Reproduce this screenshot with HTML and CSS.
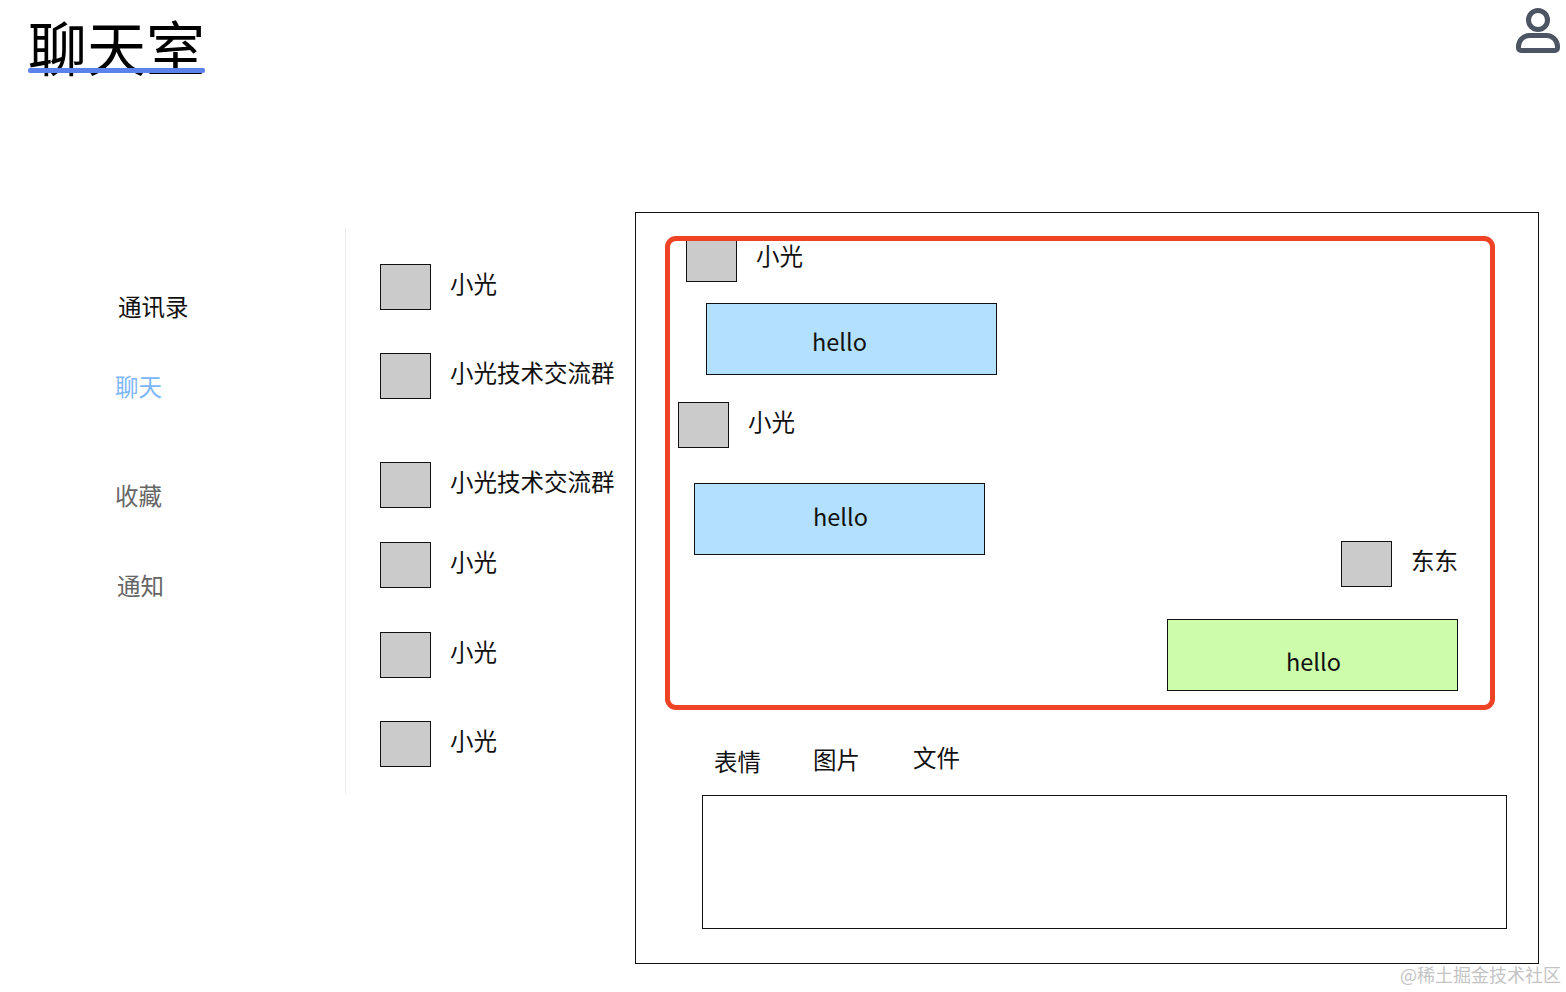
FILE: index.html
```html
<!DOCTYPE html>
<html lang="zh">
<head>
<meta charset="utf-8">
<title>聊天室</title>
<link rel="stylesheet" href="styles.css">
</head>
<body>
<div class="page">
  <header class="header">
    <h1 class="title">聊天室<span class="title-line"></span></h1>
    <svg class="user" viewBox="0 0 46 46" aria-hidden="true">
      <circle cx="23" cy="12" r="9.5"/>
      <path d="M6 42.5H40a2.5 2.5 0 0 0 2.5-2.5v-1.5a11 11 0 0 0-11-11H14.500a11 11 0 0 0-11 11V40a2.500 2.500 0 0 0 2.500 2.500z"/>
    </svg>
  </header>
  <main class="main">
    <nav class="nav">
      <a class="nav-item nav-contacts">通讯录</a>
      <a class="nav-item nav-chat">聊天</a>
      <a class="nav-item nav-fav">收藏</a>
      <a class="nav-item nav-notice">通知</a>
    </nav>
    <ul class="contacts">
      <li class="contact c1"><span class="avatar"></span><span>小光</span></li>
      <li class="contact c2"><span class="avatar"></span><span>小光技术交流群</span></li>
      <li class="contact c3"><span class="avatar"></span><span>小光技术交流群</span></li>
      <li class="contact c4"><span class="avatar"></span><span>小光</span></li>
      <li class="contact c5"><span class="avatar"></span><span>小光</span></li>
      <li class="contact c6"><span class="avatar"></span><span>小光</span></li>
    </ul>
    <section class="chat">
      <div class="messages">
        <div class="sender s1"><span class="avatar"></span><span class="name">小光</span></div>
        <div class="bubble blue b1">hello</div>
        <div class="sender s2"><span class="avatar"></span><span class="name">小光</span></div>
        <div class="bubble blue b2">hello</div>
        <div class="sender s3"><span class="avatar"></span><span class="name">东东</span></div>
        <div class="bubble green b3">hello</div>
      </div>
      <div class="tools">
        <span class="tool t1">表情</span>
        <span class="tool t2">图片</span>
        <span class="tool t3">文件</span>
      </div>
      <div class="input"></div>
    </section>
  </main>
  <div class="watermark">@稀土掘金技术社区</div>
</div>
</body>
</html>
```
FILE: styles.css
```css
* { box-sizing: border-box; }
html, body { margin: 0; padding: 0; background: #fff; overflow: hidden; }
body {
  font-family: "Noto Sans CJK SC", "Noto Sans", sans-serif;
  color: #111;
  font-size: 23.5px;
  line-height: 34px;
}
.page { position: relative; width: 1566px; height: 992px; overflow: hidden; }

.header { display: flex; justify-content: space-between; height: 212px; }
.title {
  position: relative;
  margin: 13px 0 0 28px;
  height: 66px;
  font-size: 59px;
  line-height: 66px;
  font-weight: 400;
  color: #000;
}
.title-line {
  position: absolute;
  left: 0;
  top: 55px;
  width: 177px;
  height: 5px;
  border-radius: 2px;
  background: #5b82ec;
}
.user { width: 46px; height: 46px; margin: 8px 5px 0 0; fill: none; stroke: #4b5563; stroke-width: 5; }

.main { display: flex; align-items: flex-start; }

.nav {
  display: flex;
  flex-direction: column;
  width: 346px;
  height: 567px;
  margin-top: 16px;
  border-right: 1px solid #eeeeee;
  color: #666;
}
.nav-item { display: block; }
.nav-contacts { margin: 61px 0 0 118px; color: #111; }
.nav-chat { margin: 46px 0 0 115px; color: #7cb6fb; }
.nav-fav { margin: 75px 0 0 115px; }
.nav-notice { margin: 56px 0 0 117px; }

.contacts { list-style: none; margin: 0; padding: 52px 0 0 34px; width: 289px; }
.contact { display: flex; align-items: center; gap: 19px; height: 46px; white-space: nowrap; }
.contact span:last-child { position: relative; top: -4px; }
.c2 { margin-top: 43px; }
.c3 { margin-top: 63px; }
.c4 { margin-top: 34px; }
.c5 { margin-top: 44px; }
.c6 { margin-top: 43px; }

.avatar {
  display: block;
  flex: none;
  width: 51px;
  height: 46px;
  background: #cbcbcb;
  border: 1px solid #111;
}

.chat { width: 904px; height: 752px; border: 1px solid #111; padding: 23px 0 0 29px; }
.messages {
  width: 830px;
  height: 474px;
  border: 5px solid #ee4325;
  border-radius: 11px;
  overflow: hidden;
}
.sender { display: flex; align-items: center; gap: 19px; height: 46px; }
.name { position: relative; top: -4px; }
.s1 { margin: -5px 0 0 16px; }
.s2 { margin: 27px 0 0 8px; }
.s3 { margin: -14px 0 0 671px; }

.bubble {
  width: 291px;
  height: 72px;
  border: 1px solid #111;
}
.blue { background: #b3e1fd; }
.green { background: #cdfdab; }
.b1 { margin: 21px 0 0 36px; padding-left: 105px; line-height: 74px; }
.b2 { margin: 35px 0 0 24px; padding-left: 118px; line-height: 64px; }
.b3 { margin: 32px 0 0 497px; padding-left: 118px; line-height: 82px; }

.tools { display: flex; align-items: flex-end; margin: 24px 0 0 49px; height: 40px; }
.tool { display: block; }
.t1 { position: relative; top: 4px; }
.t2 { margin-left: 52px; position: relative; top: 2px; }
.t3 { margin-left: 53px; }

.input { width: 805px; height: 134px; margin: 21px 0 0 37px; border: 1px solid #111; }

.watermark {
  position: absolute;
  right: 5px;
  bottom: 5px;
  font-size: 18px;
  line-height: 26px;
  color: #c4c4c4;
  white-space: nowrap;
}
```
